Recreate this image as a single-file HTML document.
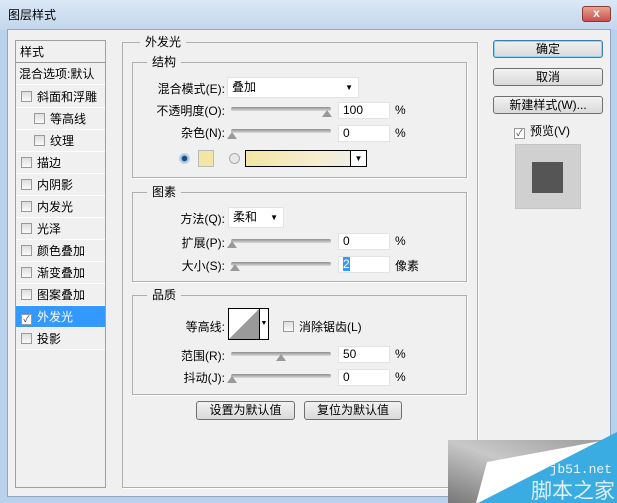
<!DOCTYPE html>
<html><head><meta charset="utf-8"><style>
*{margin:0;padding:0;box-sizing:border-box}
body{width:617px;height:503px;overflow:hidden;background:#b9d1ea;font-family:"Liberation Sans","Noto Sans CJK SC",sans-serif;font-size:12px;color:#000;position:relative}
.a{position:absolute}
.title{left:0;top:0;width:617px;height:30px;background:linear-gradient(#dbe8f6,#c3d6ec);}
.body{left:7px;top:29px;width:604px;height:468px;background:#f0f0f0;border:1px solid #8ea7c4}
.close{left:582px;top:6px;width:29px;height:16px;background:linear-gradient(#e8a492,#c75050);border:1px solid #8a3a30;border-radius:3px;color:#fff;font-weight:bold;text-align:center;line-height:13px;font-size:12px}
.list{left:15px;top:40px;width:91px;height:448px;border:1px solid #a0a0a0;background:#f0f0f0}
.row{position:absolute;left:0;width:89px;height:22px;line-height:22px;border-bottom:1px solid #fff}
.cb{display:inline-block;width:11px;height:11px;border:1px solid #999;background:linear-gradient(#ddd,#fafafa);vertical-align:-1px;margin-right:5px}
.grp{border:1px solid #b0b0b0;box-shadow:1px 1px 0 #fff}
.lg{position:absolute;background:#f0f0f0;padding:0 5px;line-height:14px;top:-8px}
.in{background:#fff;border:1px solid #e3e3e3;height:17px;line-height:15px;padding-left:4px}
.track{height:4px;background:linear-gradient(#8d8d8d,#dcdcdc);border-radius:2px}
.thumb{width:0;height:0;border-left:5px solid transparent;border-right:5px solid transparent;border-bottom:7px solid #999}
.btn{border:1px solid #707070;border-radius:3px;background:linear-gradient(#f2f2f2,#d9d9d9);text-align:center;line-height:16px}
.r{text-align:right}
</style></head><body>
<div class="a title"></div>
<div class="a" style="left:8px;top:6px;font-size:12px">图层样式</div>
<div class="a close">x</div>
<div class="a body"></div>

<div class="a list">
<div class="row" style="top:0;padding-left:4px;border-bottom:1px solid #999">样式</div>
<div class="row" style="top:22px;padding-left:3px;width:89px;white-space:nowrap;overflow:hidden">混合选项:默认</div>
<div class="row" style="top:45px;padding-left:5px"><span class="cb"></span>斜面和浮雕</div>
<div class="row" style="top:67px;padding-left:18px"><span class="cb"></span>等高线</div>
<div class="row" style="top:89px;padding-left:18px"><span class="cb"></span>纹理</div>
<div class="row" style="top:111px;padding-left:5px"><span class="cb"></span>描边</div>
<div class="row" style="top:133px;padding-left:5px"><span class="cb"></span>内阴影</div>
<div class="row" style="top:155px;padding-left:5px"><span class="cb"></span>内发光</div>
<div class="row" style="top:177px;padding-left:5px"><span class="cb"></span>光泽</div>
<div class="row" style="top:199px;padding-left:5px"><span class="cb"></span>颜色叠加</div>
<div class="row" style="top:221px;padding-left:5px"><span class="cb"></span>渐变叠加</div>
<div class="row" style="top:243px;padding-left:5px"><span class="cb"></span>图案叠加</div>
<div class="row" style="top:265px;padding-left:5px;background:#3399ff;color:#fff"><span class="cb" style="background:#fff;text-align:center;line-height:9px;font-size:9px;color:#335">✓</span>外发光</div>
<div class="row" style="top:287px;padding-left:5px"><span class="cb"></span>投影</div>
</div>

<div class="a grp" style="left:122px;top:42px;width:356px;height:446px"><span class="lg" style="left:17px">外发光</span></div>
<div class="a grp" style="left:132px;top:62px;width:335px;height:116px"><span class="lg" style="left:14px">结构</span></div>
<div class="a grp" style="left:132px;top:192px;width:335px;height:90px"><span class="lg" style="left:14px">图素</span></div>
<div class="a grp" style="left:132px;top:295px;width:335px;height:100px"><span class="lg" style="left:14px">品质</span></div>

<div class="a r" style="left:140px;top:80px;width:85px">混合模式(E):</div>
<div class="a in" style="left:227px;top:77px;width:132px;height:21px;line-height:19px">叠加<span style="position:absolute;right:5px;font-size:8px">▼</span></div>
<div class="a r" style="left:140px;top:102px;width:85px">不透明度(O):</div>
<div class="a track" style="left:231px;top:107px;width:100px"></div>
<div class="a thumb" style="left:322px;top:110px"></div>
<div class="a in" style="left:338px;top:102px;width:52px">100</div>
<div class="a" style="left:395px;top:103px">%</div>
<div class="a r" style="left:140px;top:124px;width:85px">杂色(N):</div>
<div class="a track" style="left:231px;top:129px;width:100px"></div>
<div class="a thumb" style="left:227px;top:132px"></div>
<div class="a in" style="left:338px;top:125px;width:52px">0</div>
<div class="a" style="left:395px;top:126px">%</div>
<div class="a" style="left:179px;top:153px;width:11px;height:11px;border-radius:50%;background:radial-gradient(#1c4b7c 30%,#9cc3e5 40%,#e6f0f8)"></div>
<div class="a" style="left:198px;top:150px;width:16px;height:17px;background:#f2e6a4;border:1px solid #bbb"></div>
<div class="a" style="left:229px;top:153px;width:11px;height:11px;border-radius:50%;border:1px solid #aaa;background:#e8e8e8"></div>
<div class="a" style="left:245px;top:150px;width:122px;height:17px;border:1px solid #000;background:linear-gradient(90deg,#f2e6a4,#f5eed0 60%,#eee)"></div>
<div class="a" style="left:350px;top:151px;width:16px;height:15px;border-left:1px solid #000;background:#fff;font-size:8px;text-align:center;line-height:15px">▼</div>

<div class="a r" style="left:140px;top:210px;width:85px">方法(Q):</div>
<div class="a in" style="left:228px;top:207px;width:56px;height:21px;line-height:19px">柔和<span style="position:absolute;right:5px;font-size:8px">▼</span></div>
<div class="a r" style="left:140px;top:234px;width:85px">扩展(P):</div>
<div class="a track" style="left:231px;top:239px;width:100px"></div>
<div class="a thumb" style="left:227px;top:241px"></div>
<div class="a in" style="left:338px;top:233px;width:52px">0</div>
<div class="a" style="left:395px;top:234px">%</div>
<div class="a r" style="left:140px;top:257px;width:85px">大小(S):</div>
<div class="a track" style="left:231px;top:262px;width:100px"></div>
<div class="a thumb" style="left:230px;top:264px"></div>
<div class="a in" style="left:338px;top:256px;width:52px"><span style="background:#3399ff;color:#fff">2</span></div>
<div class="a" style="left:395px;top:257px">像素</div>

<div class="a r" style="left:140px;top:318px;width:85px">等高线:</div>
<div class="a" style="left:228px;top:308px;width:41px;height:32px;border:1px solid #000;background:#fff">
<svg width="30" height="30" style="position:absolute;left:0;top:0"><polygon points="0,30 30,0 30,30" fill="#9a9a9a"/></svg>
<div style="position:absolute;left:30px;top:0;width:9px;height:30px;border-left:1px solid #000;font-size:7px;line-height:30px;text-align:center">▼</div></div>
<div class="a" style="left:283px;top:318px"><span class="cb"></span>消除锯齿(L)</div>
<div class="a r" style="left:140px;top:347px;width:85px">范围(R):</div>
<div class="a track" style="left:231px;top:352px;width:100px"></div>
<div class="a thumb" style="left:276px;top:354px"></div>
<div class="a in" style="left:338px;top:346px;width:52px">50</div>
<div class="a" style="left:395px;top:347px">%</div>
<div class="a r" style="left:140px;top:369px;width:85px">抖动(J):</div>
<div class="a track" style="left:231px;top:374px;width:100px"></div>
<div class="a thumb" style="left:227px;top:376px"></div>
<div class="a in" style="left:338px;top:369px;width:52px">0</div>
<div class="a" style="left:395px;top:370px">%</div>

<div class="a btn" style="left:196px;top:401px;width:99px;height:19px">设置为默认值</div>
<div class="a btn" style="left:304px;top:401px;width:98px;height:19px">复位为默认值</div>

<div class="a btn" style="left:493px;top:40px;width:110px;height:18px;border-color:#3c7fb1;box-shadow:inset 0 0 0 1px #8fd3f3">确定</div>
<div class="a btn" style="left:493px;top:68px;width:110px;height:18px">取消</div>
<div class="a btn" style="left:493px;top:96px;width:110px;height:18px">新建样式(W)...</div>
<div class="a" style="left:514px;top:122px"><span class="cb" style="background:#fff;font-size:9px;line-height:9px;text-align:center;color:#335">✓</span>预览(V)</div>
<div class="a" style="left:515px;top:144px;width:66px;height:65px;background:#d0d0d0;border:1px solid #c4c4c4"></div>
<div class="a" style="left:532px;top:162px;width:31px;height:31px;background:#555"></div>

<svg class="a" style="left:448px;top:430px" width="169" height="73">
<defs><linearGradient id="g" x1="0" x2="1" y1="1" y2="0"><stop offset="0" stop-color="#777"/><stop offset="0.5" stop-color="#c8c8c8"/><stop offset="1" stop-color="#999"/></linearGradient></defs>
<rect x="0" y="10" width="169" height="63" fill="url(#g)"/>
<polygon points="39,32 169,8 169,73 28,73" fill="#fff"/>
<polygon points="169,2 169,73 30,73" fill="#3bace2"/>
<text x="164" y="43" font-family="Liberation Mono,monospace" font-size="13" fill="#e8f4fa" text-anchor="end">jb51.net</text>
<text x="167" y="68" font-family="Noto Sans CJK SC,sans-serif" font-size="21" fill="#dff0fa" text-anchor="end">脚本之家</text>
</svg>
</body></html>
